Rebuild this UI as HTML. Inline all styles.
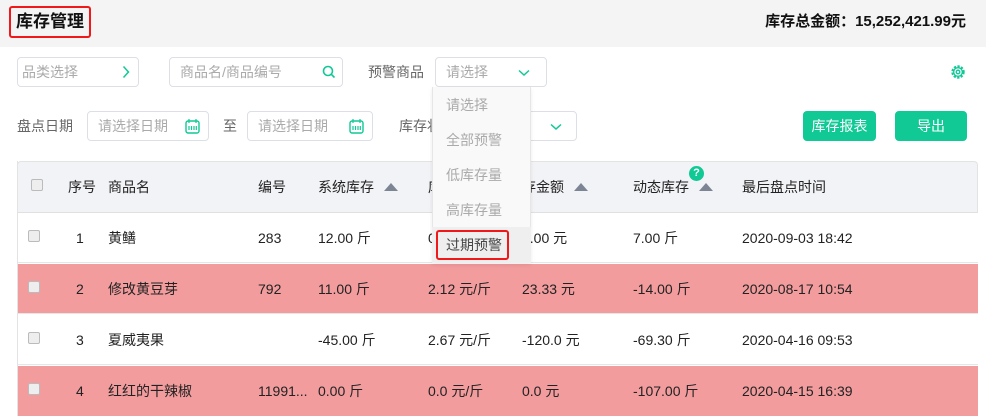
<!DOCTYPE html>
<html><head><meta charset="utf-8"><style>
*{margin:0;padding:0;box-sizing:border-box}
body{width:986px;height:416px;overflow:hidden;background:#fff;font-family:"Liberation Sans","Noto Sans CJK SC",sans-serif;font-size:14px;color:#333;position:relative}
.a{position:absolute;white-space:nowrap;line-height:20px}
.inp{position:absolute;border:1px solid #dcdfe6;border-radius:4px;background:#fff;color:#aaa;font-size:14px}
.inp span{position:absolute;top:4px;line-height:20px}
.btn{position:absolute;background:#10c995;color:#fff;border-radius:4px;text-align:center;line-height:30px;font-size:14px}
.cb{position:absolute;width:12px;height:12px;border:1px solid #bbb;border-radius:2px;background:#eee}
.row{position:absolute;left:17px;width:961px;height:50px;border-bottom:1px solid #e6e6e6}
.tri{display:inline-block;width:0;height:0;border-left:7px solid transparent;border-right:7px solid transparent;border-bottom:8px solid #7d8594;margin-left:10px;vertical-align:1px}
.t{color:#222}
</style></head><body>
<div class="a" style="left:0;top:0;width:986px;height:47px;background:#f4f4f4"></div>
<div class="a" style="left:9px;top:6px;width:82px;height:32px;border:2px solid #f01818;border-radius:3px"></div>
<div class="a" style="left:16px;top:12px;font-size:17px;font-weight:bold;color:#111">库存管理</div>
<div class="a" style="right:20px;top:12px;font-size:15px;font-weight:bold;color:#111">库存总金额：15,252,421.99元</div>

<div class="inp" style="left:17px;top:57px;width:122px;height:30px"><span style="left:4px">品类选择</span>
<svg class="a" style="right:8px;top:7px" width="8" height="14" viewBox="0 0 8 14"><path d="M1.5 1.5L6.5 7L1.5 12.5" fill="none" stroke="#10c995" stroke-width="1.5"/></svg></div>
<div class="inp" style="left:169px;top:57px;width:174px;height:30px"><span style="left:10px">商品名/商品编号</span>
<svg class="a" style="right:6px;top:7px" width="14" height="14" viewBox="0 0 14 14"><circle cx="6" cy="6" r="4.5" fill="none" stroke="#10c995" stroke-width="1.6"/><path d="M9.3 9.3L12.5 12.5" stroke="#10c995" stroke-width="1.6"/></svg></div>
<div class="a" style="left:368px;top:62px;color:#666">预警商品</div>
<div class="inp" style="left:435px;top:57px;width:112px;height:30px"><span style="left:10px">请选择</span>
<svg class="a" style="right:16px;top:11px" width="12" height="8" viewBox="0 0 12 8"><path d="M1 1.5L6 6L11 1.5" fill="none" stroke="#10c995" stroke-width="1.5"/></svg></div>
<svg class="a" style="left:950px;top:64px" width="16" height="16" viewBox="0 0 16 16"><circle cx="8" cy="8" r="5.5" fill="none" stroke="#10c995" stroke-width="2.4" stroke-dasharray="2.2 1.4"/><circle cx="8" cy="8" r="4.6" fill="#fff"/><circle cx="8" cy="8" r="4.3" fill="none" stroke="#10c995" stroke-width="1.3"/><circle cx="8" cy="8" r="1.8" fill="none" stroke="#10c995" stroke-width="1.3"/></svg>

<div class="a" style="left:17px;top:116px;color:#666">盘点日期</div>
<div class="inp" style="left:87px;top:111px;width:122px;height:30px"><span style="left:10px">请选择日期</span>
<svg class="a" style="right:8px;top:6px" width="15" height="16" viewBox="0 0 15 16"><rect x="1" y="3" width="13" height="12" rx="2" fill="none" stroke="#10c995" stroke-width="1.4"/><path d="M4 1v4M11 1v4M4 8v4M6.5 8v4M9 8v4M11.3 8v4" stroke="#10c995" stroke-width="1.2"/></svg></div>
<div class="a" style="left:223px;top:116px;color:#666">至</div>
<div class="inp" style="left:247px;top:111px;width:126px;height:30px"><span style="left:10px">请选择日期</span>
<svg class="a" style="right:8px;top:6px" width="15" height="16" viewBox="0 0 15 16"><rect x="1" y="3" width="13" height="12" rx="2" fill="none" stroke="#10c995" stroke-width="1.4"/><path d="M4 1v4M11 1v4M4 8v4M6.5 8v4M9 8v4M11.3 8v4" stroke="#10c995" stroke-width="1.2"/></svg></div>
<div class="a" style="left:399px;top:116px;color:#666">库存状态</div>
<div class="inp" style="left:470px;top:111px;width:107px;height:30px">
<svg class="a" style="right:14px;top:11px" width="12" height="8" viewBox="0 0 12 8"><path d="M1 1.5L6 6L11 1.5" fill="none" stroke="#10c995" stroke-width="1.5"/></svg></div>
<div class="btn" style="left:803px;top:111px;width:73px;height:30px">库存报表</div>
<div class="btn" style="left:895px;top:111px;width:72px;height:30px">导出</div>

<div class="a" style="left:17px;top:161px;width:961px;height:52px;background:#f2f3f6;border:1px solid #e3e3e3;border-bottom:1px solid #e0e0e0;border-radius:4px 4px 0 0"></div>
<div class="cb" style="left:31px;top:179px"></div>
<div class="a t" style="left:68px;top:177px">序号</div>
<div class="a t" style="left:108px;top:177px">商品名</div>
<div class="a t" style="left:258px;top:177px">编号</div>
<div class="a t" style="left:318px;top:177px">系统库存<span class="tri"></span></div>
<div class="a t" style="left:428px;top:177px">库存单价</div>
<div class="a t" style="left:508px;top:177px">库存金额<span class="tri"></span></div>
<div class="a t" style="left:633px;top:177px">动态库存<span class="tri"></span></div>
<div class="a" style="left:689px;top:166px;width:15px;height:15px;border-radius:50%;background:#10c995;color:#fff;font-size:11px;font-weight:bold;text-align:center;line-height:15px">?</div>
<div class="a t" style="left:742px;top:177px">最后盘点时间</div>

<div class="row" style="top:213px;background:#fff"></div>
<div class="row" style="top:264px;background:#f29c9d"></div>
<div class="row" style="top:315px;background:#fff"></div>
<div class="row" style="top:366px;background:#f29c9d;border:none"></div>
<div class="a" style="left:17px;top:161px;width:1px;height:255px;background:#e3e3e3"></div>

<div class="cb" style="left:28px;top:230px"></div><div class="cb" style="left:28px;top:281px"></div><div class="cb" style="left:28px;top:332px"></div><div class="cb" style="left:28px;top:383px"></div>
<div class="a t" style="left:76px;top:228px">1</div><div class="a t" style="left:108px;top:228px">黄鳝</div><div class="a t" style="left:258px;top:228px">283</div><div class="a t" style="left:318px;top:228px">12.00 斤</div><div class="a t" style="left:428px;top:228px">0.58 元/斤</div><div class="a t" style="left:522px;top:228px">7.00 元</div><div class="a t" style="left:633px;top:228px">7.00 斤</div><div class="a t" style="left:742px;top:228px">2020-09-03 18:42</div>
<div class="a t" style="left:76px;top:279px">2</div><div class="a t" style="left:108px;top:279px">修改黄豆芽</div><div class="a t" style="left:258px;top:279px">792</div><div class="a t" style="left:318px;top:279px">11.00 斤</div><div class="a t" style="left:428px;top:279px">2.12 元/斤</div><div class="a t" style="left:522px;top:279px">23.33 元</div><div class="a t" style="left:633px;top:279px">-14.00 斤</div><div class="a t" style="left:742px;top:279px">2020-08-17 10:54</div>
<div class="a t" style="left:76px;top:330px">3</div><div class="a t" style="left:108px;top:330px">夏威夷果</div><div class="a t" style="left:318px;top:330px">-45.00 斤</div><div class="a t" style="left:428px;top:330px">2.67 元/斤</div><div class="a t" style="left:522px;top:330px">-120.0 元</div><div class="a t" style="left:633px;top:330px">-69.30 斤</div><div class="a t" style="left:742px;top:330px">2020-04-16 09:53</div>
<div class="a t" style="left:76px;top:381px">4</div><div class="a t" style="left:108px;top:381px">红红的干辣椒</div><div class="a t" style="left:258px;top:381px">11991...</div><div class="a t" style="left:318px;top:381px">0.00 斤</div><div class="a t" style="left:428px;top:381px">0.0 元/斤</div><div class="a t" style="left:522px;top:381px">0.0 元</div><div class="a t" style="left:633px;top:381px">-107.00 斤</div><div class="a t" style="left:742px;top:381px">2020-04-15 16:39</div>

<div class="a" style="left:432px;top:87px;width:99px;height:176px;background:#f9f9f9;border:1px solid #e6e6e6;border-top:none;box-shadow:0 2px 4px rgba(0,0,0,.08)"></div>
<div class="a" style="left:432px;top:227px;width:99px;height:36px;background:#efefef"></div>
<div class="a" style="left:446px;top:95px;color:#aaa">请选择</div>
<div class="a" style="left:446px;top:130px;color:#aaa">全部预警</div>
<div class="a" style="left:446px;top:165px;color:#aaa">低库存量</div>
<div class="a" style="left:446px;top:200px;color:#aaa">高库存量</div>
<div class="a" style="left:436px;top:230px;width:73px;height:30px;border:2px solid #f01818;border-radius:3px"></div>
<div class="a" style="left:446px;top:235px;color:#444">过期预警</div>
</body></html>
